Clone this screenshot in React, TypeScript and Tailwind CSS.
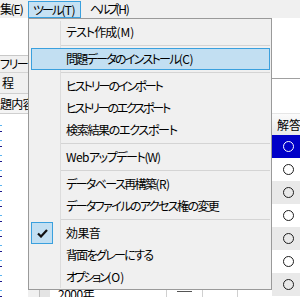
import React from "react";

type LP = { label: string; tr: string; pre?: string; ptr?: string; post?: string; qtr?: string };

function Label({ label, tr, pre, ptr, post, qtr }: LP) {
  return (
    <span className="whitespace-nowrap">
      {pre ? <span className={ptr}>{pre}</span> : null}
      <span className={tr}>{label}</span>
      {post ? <span className={qtr}>{post}</span> : null}
    </span>
  );
}

function Item(p: LP) {
  return (
    <div className="flex h-[22px] items-center">
      <div className="w-[32px] h-full border-r border-[#dcdcdc]" />
      <div className="pl-[5px] leading-[22px]">
        <Label {...p} />
      </div>
    </div>
  );
}

function HotItem(p: LP) {
  return (
    <div className="flex h-[22px] items-center ml-[2px] mr-[1px] border border-[#3aa0de] bg-[#c2dff2]">
      <div className="w-[28px] h-full" />
      <div className="pl-[6px] leading-[20px]">
        <Label {...p} />
      </div>
    </div>
  );
}

function CheckItem(p: LP) {
  return (
    <div className="flex h-[22px] items-center">
      <div className="w-[32px] h-full border-r border-[#dcdcdc] flex items-center">
        <div className="ml-[2px] w-[22px] h-[22px] border border-[#3aa0de] bg-[#c2dff2] flex items-center justify-center">
          <svg width="11" height="9" viewBox="0 0 11 9">
            <path d="M1 4.5 L4 7.5 L10 1" fill="none" stroke="#111" strokeWidth="2.2" />
          </svg>
        </div>
      </div>
      <div className="pl-[5px] leading-[22px]">
        <Label {...p} />
      </div>
    </div>
  );
}

function Sep() {
  return (
    <div className="flex h-[5px]">
      <div className="w-[32px] h-full border-r border-[#dcdcdc]" />
      <div className="flex-1 mt-[2px] h-[1px] bg-[#d4d4d4] mr-[1px]" />
    </div>
  );
}

function Row({ kind }: { kind: "blue" | "white" | "gray" }) {
  const bg =
    kind === "blue" ? "bg-[#0000c8]" : kind === "gray" ? "bg-[#e9e9e9]" : "bg-white";
  const ring = kind === "blue" ? "border-white" : "border-[#1e1e1e]";
  return (
    <div className={`h-[23px] shrink-0 flex items-center ${bg}`}>
      <div className={`ml-[11px] w-[11px] h-[11px] rounded-full border ${ring}`} />
    </div>
  );
}

export default function App() {
  const marks = Array.from({ length: 12 });
  return (
    <div className="relative w-[300px] h-[297px] overflow-hidden bg-white text-[12px] text-black font-['Noto_Sans_CJK_JP',sans-serif] [font-feature-settings:'palt']">
      {/* menu bar */}
      <div className="flex h-[18px] bg-[#f0f0f0] whitespace-nowrap">
        <div className="w-[28px] leading-[18px]">
          <span className="tracking-[-1.5px]">集</span>
          <span className="tracking-[-1px]">(E)</span>
        </div>
        <div className="w-[53px] mt-[1px] h-[17px] border border-[#3aa0de] bg-[#c6e1f3] pl-[4px] leading-[15px]">
          <span className="tracking-[-1.9px]">ツール</span>
          <span className="tracking-[-0.6px]">(T)</span>
        </div>
        <div className="pl-[9px] leading-[18px]">
          <span className="tracking-[-3px]">ヘルプ</span>
          <span className="tracking-[-1.2px]">(H)</span>
        </div>
      </div>

      {/* body */}
      <div className="flex h-[279px]">
        {/* left panel */}
        <div className="w-[28px] flex flex-col bg-white overflow-hidden whitespace-nowrap">
          <div className="h-[37px] shrink-0" />
          <div className="h-[17px] shrink-0 border-t border-[#c8c8c8] bg-[#f0f0f0] leading-[16px] tracking-[-1.5px]">
            フリーワード
          </div>
          <div className="h-[21px] shrink-0 border-t border-[#d4d4d4] bg-[#f0f0f0] pl-[2px] leading-[20px]">
            程
          </div>
          <div className="h-[21px] shrink-0 border-t border-b border-[#cfcfcf] bg-[#f4f4f4] leading-[19px] tracking-[-0.8px]">
            題内容
          </div>
          <div className="flex-1 pt-[11px] flex flex-col">
            {marks.map((_, i) => (
              <div key={i} className="h-[15px] shrink-0">
                <div className="h-[1px] w-[2px] bg-[#5ab4f0]" />
                <div className="mt-[5px] h-[1px] w-[2px] bg-[#1a1a8c]" />
              </div>
            ))}
          </div>
        </div>

        {/* center (under menu) */}
        <div className="w-[244px] flex flex-col bg-[#f0f0f0]">
          <div className="flex-1" />
          <div className="h-[8px] flex shrink-0">
            <div className="w-[11px]" />
            <div className="w-[11px] border-l border-[#bdbdbd] bg-[#e4e4e4]" />
            <div className="flex-1 flex bg-white">
              <div className="w-[116px] pl-[8px] overflow-hidden leading-[12px] -mt-[1px] whitespace-nowrap tracking-[-0.5px]">
                2000年
              </div>
              <div className="w-[36px] border-l border-[#d0d0d0]">
                <div className="ml-[10px] mt-[2px] h-[1px] w-[15px] bg-[#555]" />
              </div>
              <div className="w-[35px] border-l border-[#d0d0d0]" />
              <div className="flex-1 border-l border-[#d0d0d0]" />
            </div>
          </div>
        </div>

        {/* right panel */}
        <div className="w-[28px] flex flex-col overflow-hidden whitespace-nowrap">
          <div className="h-[61px] shrink-0 bg-white border-b border-[#a0a0a0]" />
          <div className="h-[34px] shrink-0 bg-white" />
          <div className="h-[22px] shrink-0 border-t border-[#e6e6e6] bg-gradient-to-b from-[#fbfbfb] to-[#e8e8e8] pl-[5px] leading-[21px]">
            解答
          </div>
          <Row kind="blue" />
          <Row kind="white" />
          <Row kind="gray" />
          <Row kind="white" />
          <Row kind="gray" />
          <Row kind="white" />
          <Row kind="gray" />
          <Row kind="white" />
        </div>
      </div>

      {/* dropdown menu */}
      <div className="absolute left-[28px] top-[18px] w-[244px] border border-[#9a9a9a] bg-[#f0f0f0] pt-[2px] pb-[1px]">
        <Item label="テスト作成" tr="tracking-[-0.9px]" post="(M)" qtr="tracking-[0px]" />
        <Sep />
        <HotItem label="問題データのインストール" tr="tracking-[-1.7px]" post="(C)" qtr="tracking-[-0.5px]" />
        <Sep />
        <Item label="ヒストリーのインポート" tr="tracking-[-2px]" />
        <Item label="ヒストリーのエクスポート" tr="tracking-[-2.2px]" />
        <Item label="検索結果のエクスポート" tr="tracking-[-1.3px]" />
        <Sep />
        <Item pre="Web" ptr="tracking-[-0.6px]" label="アップデート" tr="tracking-[-1.4px]" post="(W)" qtr="tracking-[-1px]" />
        <Sep />
        <Item label="データベース再構築" tr="tracking-[-1.6px]" post="(R)" qtr="tracking-[-0.5px]" />
        <Item label="データファイルのアクセス権の変更" tr="tracking-[-1.6px]" />
        <Sep />
        <CheckItem label="効果音" tr="tracking-[-0.6px]" />
        <Item label="背面をグレーにする" tr="tracking-[-1.7px]" />
        <Item label="オプション" tr="tracking-[-2.3px]" post="(O)" qtr="tracking-[0px]" />
      </div>
    </div>
  );
}
